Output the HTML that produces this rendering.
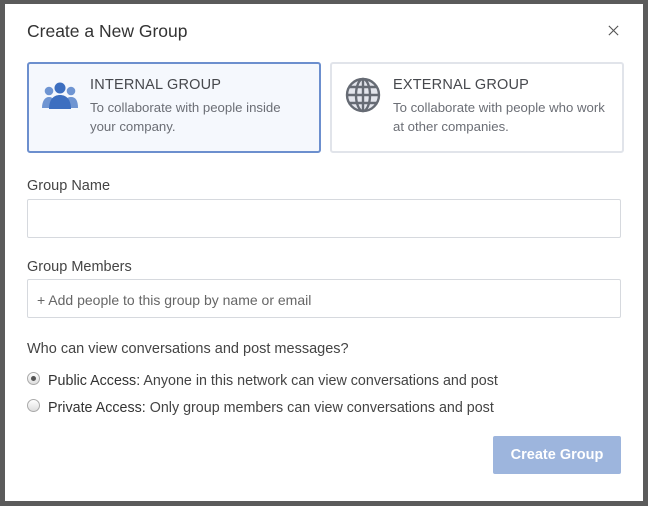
<!DOCTYPE html>
<html><head><style>
*{box-sizing:border-box;margin:0;padding:0}
body{width:648px;height:506px;background:#5b5b5b;font-family:"Liberation Sans",sans-serif;position:relative;overflow:hidden;color:#333}
.m{position:absolute;left:5px;top:4px;width:638px;height:497px;background:#fff}
.a{position:absolute}
.t{left:22px;top:17px;font-size:17.5px;color:#333}
.x{left:602px;top:20px}
.card{top:58px;width:294px;height:91px;border:2px solid #e1e4ea;border-radius:3px;background:#fff}
.card.s{border-color:#6c8fce;background:#f5f8fd}
.card h{position:absolute;left:61px;top:13px;font-size:14.5px;color:#46484d;letter-spacing:.2px}
.card p{position:absolute;left:61px;top:34px;font-size:13.2px;line-height:19px;color:#6b6e75}
.lbl{font-size:14.5px;color:#444;left:22px}
.in{left:22px;width:594px;height:39px;border:1px solid #d6d9de;border-radius:2px}
.ph{position:absolute;left:9px;top:12px;font-size:14px;color:#666}
.r{left:22px;font-size:14.3px;color:#444}
.r b{font-weight:normal;color:#333}
.rad{position:absolute;left:0;top:1px;width:13px;height:13px;border-radius:50%;border:1px solid #aaa;background:linear-gradient(#fff,#ddd)}
.btn{left:488px;top:432px;width:128px;height:38px;background:#9db5dd;border-radius:2px;color:#fff;font-size:14.5px;text-align:center;line-height:38px;font-weight:bold}
</style></head><body>
<div class="m">
<div class="a t">Create a New Group</div>
<svg class="a x" width="13" height="13" viewBox="0 0 14 14"><path d="M2 2L12 12M12 2L2 12" stroke="#555" stroke-width="1.2"/></svg>
<div class="a card s" style="left:22px">
<svg class="a" style="left:13px;top:18px" width="36" height="29" viewBox="0 0 36 29"><circle cx="7" cy="9" r="4.3" fill="#6f95d2"/><circle cx="29" cy="9" r="4.3" fill="#6f95d2"/><path d="M0 26c0-7 3-11 7-11s8 4 8 11z" fill="#6f95d2"/><path d="M21 26c0-7 3-11 8-11s7 4 7 11z" fill="#6f95d2"/><circle cx="18" cy="6" r="5.5" fill="#3d6fc0"/><path d="M7 27c0-10 5-14 11-14s11 4 11 14z" fill="#3d6fc0"/></svg>
<h>INTERNAL GROUP</h><p>To collaborate with people inside<br>your company.</p></div>
<div class="a card" style="left:325px">
<svg class="a" style="left:13px;top:13px" width="36" height="36" viewBox="0 0 36 36" fill="#e3e5ec" stroke="#666b74" stroke-width="2.4"><circle cx="18" cy="18" r="16"/><ellipse cx="18" cy="18" rx="7" ry="16"/><path d="M18 2v32M2 18h32M4.5 10h27M4.5 26h27" fill="none"/></svg>
<h>EXTERNAL GROUP</h><p>To collaborate with people who work<br>at other companies.</p></div>
<div class="a lbl" style="top:174px">Group Name</div>
<div class="a in" style="top:195px"></div>
<div class="a lbl" style="top:255px">Group Members</div>
<div class="a in" style="top:275px"><span class="ph">+ Add people to this group by name or email</span></div>
<div class="a lbl" style="top:337px">Who can view conversations and post messages?</div>
<div class="a r" style="top:369px;padding-left:21px"><span class="rad" style="top:-1px"><span style="position:absolute;left:3px;top:3px;width:5px;height:5px;border-radius:50%;background:#555"></span></span><b>Public Access:</b> Anyone in this network can view conversations and post</div>
<div class="a r" style="top:396px;padding-left:21px"><span class="rad" style="top:-1px"></span><b>Private Access:</b> Only group members can view conversations and post</div>
<div class="a btn">Create Group</div>
</div>
</body></html>
